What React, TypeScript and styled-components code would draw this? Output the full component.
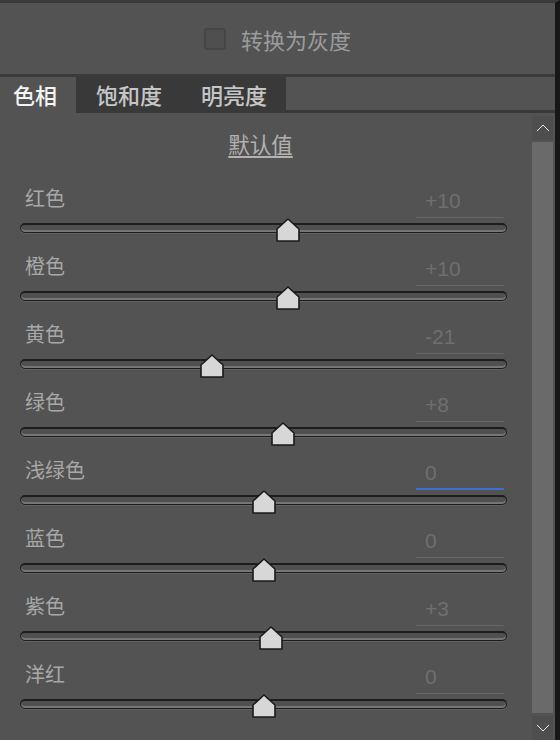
import React from 'react';
import styled, {createGlobalStyle} from 'styled-components';

const GlobalStyle = createGlobalStyle`
    html, body {
        margin: 0;
        padding: 0;
        background: #535353;
    }
    * {
        box-sizing: border-box;
    }
`;

const Frame = styled.main`
    width: 560px;
    height: 740px;
    display: flex;
    flex-direction: column;
    background: #535353;
    border-top: 3px solid #3a3a3a;
    border-right: 5px solid #171717;
    font-family: "Noto Sans CJK SC", "Liberation Sans", sans-serif;
    overflow: hidden;
`;

const Header = styled.div`
    height: 74px;
    display: flex;
    align-items: center;
    justify-content: center;
    gap: 15px;
    border-bottom: 3px solid #3b3b3b;
`;

const CheckBox = styled.span`
    width: 22px;
    height: 22px;
    border: 2px solid #454545;
    border-radius: 3px;
    background: #4f4f4f;
`;

const CheckLabel = styled.span`
    font-size: 22px;
    line-height: 28px;
    color: #9c9c9c;
`;

const TabBar = styled.div`
    height: 36px;
    display: flex;
`;

const Tab = styled.div<{$active?: boolean}>`
    height: 36px;
    display: flex;
    align-items: center;
    padding: ${p => (p.$active ? '0 19px 2px 13px' : '0 19px 2px 20px')};
    font-size: 22px;
    font-weight: 500;
    color: ${p => (p.$active ? '#f4f4f4' : '#c6c6c6')};
    background: ${p => (p.$active ? 'transparent' : '#393939')};
`;

const TabFill = styled.div`
    flex: 1;
    border-bottom: 3px solid #393939;
`;

const Body = styled.div`
    flex: 1;
    display: flex;
    min-height: 0;
`;

const Content = styled.div`
    flex: 1;
    display: flex;
    flex-direction: column;
    padding: 19px 25px 0 20px;
`;

const DefaultLink = styled.div`
    align-self: center;
    margin-left: -6px;
    margin-bottom: 28px;
    font-size: 21.5px;
    line-height: 24px;
    color: #b2b2b2;
    text-decoration: underline;
    text-underline-offset: 3px;
`;

const Row = styled.div`
    height: 68px;
    display: flex;
    flex-direction: column;
`;

const RowHead = styled.div`
    height: 34px;
    display: flex;
    align-items: flex-end;
    justify-content: space-between;
    padding: 0 3px 0 5px;
`;

const Label = styled.span`
    font-size: 20px;
    line-height: 26px;
    margin-bottom: 7px;
    color: #a8a8a8;
`;

const ValueBox = styled.span<{$focused?: boolean}>`
    width: 88px;
    height: 28px;
    padding-left: 9px;
    font-family: "Liberation Sans", "DejaVu Sans", sans-serif;
    font-size: 21px;
    line-height: 22px;
    color: #6f6f6f;
    border-bottom: ${p => (p.$focused ? '2px solid #3b70cc' : '1px solid #676767')};
`;

const TrackArea = styled.div`
    position: relative;
    height: 34px;
`;

const Track = styled.div`
    position: absolute;
    left: 0;
    right: 0;
    top: 5px;
    height: 10px;
    border-radius: 5px;
    background: #505050;
    border: 1px solid #1d1d1d;
    border-top-width: 2px;
    box-shadow: inset 0 -2px 0 #767676, 0 1px 0 #626262;
`;

const Thumb = styled.svg`
    position: absolute;
    top: 0;
    width: 24px;
    height: 24px;
    margin-left: -12px;
`;

const ScrollBar = styled.div`
    width: 21px;
    margin-right: 2px;
    padding-top: 3px;
    display: flex;
    flex-direction: column;
`;

const ScrollButton = styled.div`
    height: 24px;
    display: flex;
    align-items: center;
    justify-content: center;
    background: #4e4e4e;
`;

const ScrollThumb = styled.div`
    flex: 1;
    margin: 2px 0 3px;
    background: #6a6a6a;
`;

type Slider = {label: string; value: number; focused?: boolean};

const sliders: Slider[] = [
    {label: '红色', value: 10},
    {label: '橙色', value: 10},
    {label: '黄色', value: -21},
    {label: '绿色', value: 8},
    {label: '浅绿色', value: 0, focused: true},
    {label: '蓝色', value: 0},
    {label: '紫色', value: 3},
    {label: '洋红', value: 0},
];

const formatValue = (v: number) => (v > 0 ? `+${v}` : `${v}`);

const Chevron = ({up}: {up?: boolean}) => (
    <svg width="14" height="8" viewBox="0 0 14 8">
        <polyline
            points={up ? '1,7 7,1 13,7' : '1,1 7,7 13,1'}
            fill="none"
            stroke="#e6e6e6"
            strokeWidth="1"
        />
    </svg>
);

const SliderRow = ({label, value, focused}: Slider) => {
    const pct = (value + 100) / 2;
    return (
        <Row>
            <RowHead>
                <Label>{label}</Label>
                <ValueBox $focused={focused}>{formatValue(value)}</ValueBox>
            </RowHead>
            <TrackArea>
                <Track/>
                <Thumb viewBox="0 0 24 24" style={{left: `${pct}%`}}>
                    <polygon
                        points="12,1 23,11 23,23 1,23 1,11"
                        fill="#d7d7d7"
                        stroke="#1a1a1a"
                        strokeWidth="1.6"
                        strokeLinejoin="round"
                    />
                </Thumb>
            </TrackArea>
        </Row>
    );
};

export default function App() {
    return (
        <>
            <GlobalStyle/>
            <Frame>
                <Header>
                    <CheckBox/>
                    <CheckLabel>转换为灰度</CheckLabel>
                </Header>
                <TabBar>
                    <Tab $active>色相</Tab>
                    <Tab>饱和度</Tab>
                    <Tab>明亮度</Tab>
                    <TabFill/>
                </TabBar>
                <Body>
                    <Content>
                        <DefaultLink>默认值</DefaultLink>
                        {sliders.map(s => (
                            <SliderRow key={s.label} {...s}/>
                        ))}
                    </Content>
                    <ScrollBar>
                        <ScrollButton><Chevron up/></ScrollButton>
                        <ScrollThumb/>
                        <ScrollButton><Chevron/></ScrollButton>
                    </ScrollBar>
                </Body>
            </Frame>
        </>
    );
}
